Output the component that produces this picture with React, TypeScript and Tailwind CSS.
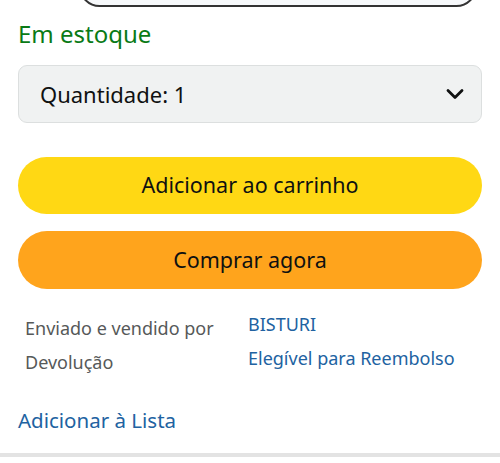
import { ChevronDown } from "lucide-react";

export default function App() {
  return (
    <div className="w-[500px] h-[463px] overflow-hidden bg-white font-['Noto_Sans',sans-serif] text-[#0f1111]">
      {/* partially visible box above */}
      <div className="ml-[79px] mr-[23px] -mt-[34px] h-[41px] rounded-[26px] border-2 border-[#333] bg-[#f7f9fb]" />

      <div className="px-[18px]">
        <div className="mt-[12px] text-[24px] leading-[30px] text-[#0a7a16]">Em estoque</div>

        <div className="mt-[16px] h-[58px] flex items-center justify-between rounded-[9px] border border-[#dcdfdf] bg-[#f0f2f2] pl-[21px] pr-[12px]">
          <span className="text-[22px]">Quantidade: 1</span>
          <ChevronDown size={28} strokeWidth={2.4} className="text-[#0f1111]" />
        </div>

        <div className="mt-[34px] flex flex-col gap-[17px]">
          <button className="h-[57px] w-full rounded-full bg-[#ffd814] text-[21.5px] text-[#0f1111]">
            Adicionar ao carrinho
          </button>
          <button className="h-[58px] w-full rounded-full bg-[#ffa41c] text-[21.5px] text-[#0f1111]">
            Comprar agora
          </button>
        </div>

        <div className="mt-[27px] pl-[7px] grid grid-cols-[223px_1fr] gap-y-[10px] text-[18px] leading-[24px]">
          <span className="text-[#565959]">Enviado e vendido por</span>
          <span className="text-[#2162a1] -mt-[4px]">BISTURI</span>
          <span className="text-[#565959]">Devolução</span>
          <span className="text-[#2162a1] -mt-[4px]">Elegível para Reembolso</span>
        </div>

        <div className="mt-[33px] text-[20.5px] leading-[26px] text-[#2162a1]">Adicionar à Lista</div>
      </div>

      <div className="mt-[20px] h-[4px] bg-[#e3e3e3]" />
    </div>
  );
}
